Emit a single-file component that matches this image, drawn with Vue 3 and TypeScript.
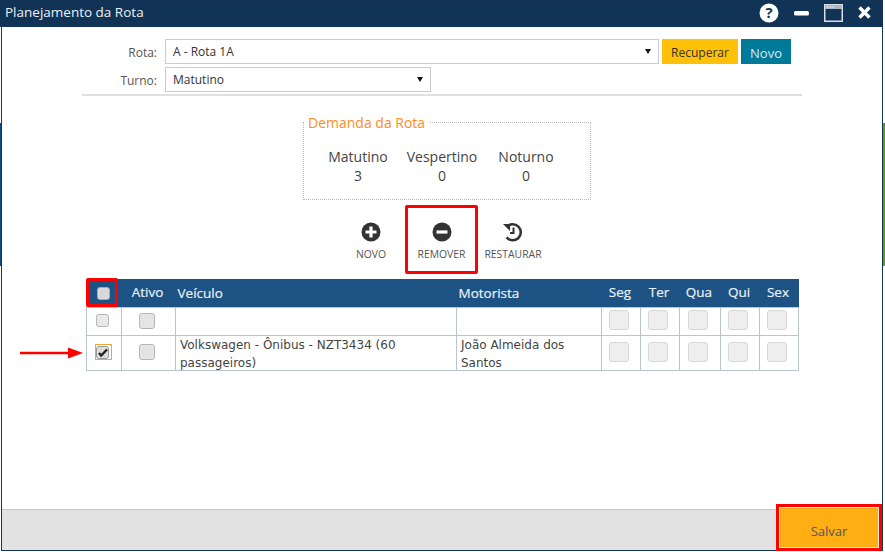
<script setup lang="ts">
interface Row { checked: boolean; vehicle: string; driver: string }
const days: string[] = ['Seg', 'Ter', 'Qua', 'Qui', 'Sex']
const rows: Row[] = [
  { checked: false, vehicle: '', driver: '' },
  { checked: true, vehicle: 'Volkswagen - Ônibus - NZT3434 (60 passageiros)', driver: 'João Almeida dos Santos' }
]
const demand = [
  { name: 'Matutino', value: 3 },
  { name: 'Vespertino', value: 0 },
  { name: 'Noturno', value: 0 }
]
</script>

<template>
  <div class="page">
    <span class="edge edge-left"></span>
    <span class="edge edge-right"></span>
    <div class="window">
      <header class="titlebar">
        <span class="title">Planejamento da Rota</span>
        <div class="controls">
          <svg width="20" height="20" viewBox="0 0 20 20"><circle cx="10" cy="10" r="9.5" fill="#fff"/><text x="10" y="15" text-anchor="middle" class="help">?</text></svg>
          <svg width="15" height="20" viewBox="0 0 15 20"><rect x="0" y="8" width="15" height="4.500" rx="1.500" fill="#fff"/></svg>
          <svg width="19" height="18" viewBox="0 0 19 18"><rect x="0.750" y="0.750" width="17.500" height="16.500" fill="none" stroke="#d5dee6" stroke-width="1.500"/><rect x="1" y="1" width="17" height="4" fill="#a9b8c6"/><path d="M2.500 3h2M5.500 3h2M8.500 3h1.500" stroke="#eef2f5" stroke-width="1.200"/></svg>
          <svg width="13" height="20" viewBox="0 0 13 20"><path d="M1.500 4.500l10 10M11.500 4.500l-10 10" fill="none" stroke="#fff" stroke-width="3.400"/></svg>
        </div>
      </header>

      <main class="body">
        <section class="form">
          <div class="form-row">
            <label class="label">Rota:</label>
            <div class="select wide">A - Rota 1A<i class="caret"></i></div>
            <button class="btn yellow">Recuperar</button>
            <button class="btn teal">Novo</button>
          </div>
          <div class="form-row">
            <label class="label">Turno:</label>
            <div class="select narrow">Matutino<i class="caret"></i></div>
          </div>
        </section>

        <fieldset class="demand">
          <legend>Demanda da Rota</legend>
          <div v-for="d in demand" :key="d.name" class="demand-col">
            <span>{{ d.name }}</span>
            <span>{{ d.value }}</span>
          </div>
        </fieldset>

        <div class="actions">
          <div class="action">
            <svg width="20" height="20" viewBox="0 0 20 20"><circle cx="10" cy="10" r="9.500" fill="#333"/><path d="M10 4.500v11M4.500 10h11" stroke="#fff" stroke-width="3.200"/></svg>
            <span>NOVO</span>
          </div>
          <div class="action marked">
            <svg width="20" height="20" viewBox="0 0 20 20"><circle cx="10" cy="10" r="9.500" fill="#333"/><path d="M4.500 10h11" stroke="#fff" stroke-width="3.200"/></svg>
            <span>REMOVER</span>
          </div>
          <div class="action">
            <svg width="20" height="20" viewBox="0 0 20 20"><path d="M3.800 5A8 8 0 1 1 3.600 15.400" fill="none" stroke="#333" stroke-width="2.600"/><path d="M0 2h7v7z" fill="#333"/><path d="M10.500 5.500v5.500H7" fill="none" stroke="#333" stroke-width="2"/></svg>
            <span>RESTAURAR</span>
          </div>
        </div>

        <div class="table-wrap">
          <span class="head-mark"></span>
          <table class="grid">
            <colgroup>
              <col class="w35"><col class="w54"><col class="w281"><col class="w145">
              <col class="w39"><col class="w39"><col class="w41"><col class="w39"><col class="w39">
            </colgroup>
            <thead>
              <tr>
                <th class="c"><span class="box small head-box"></span></th>
                <th class="c">Ativo</th>
                <th>Veículo</th>
                <th>Motorista</th>
                <th v-for="d in days" :key="d" class="c">{{ d }}</th>
              </tr>
            </thead>
            <tbody>
              <tr v-for="(r, i) in rows" :key="i" :class="{ tall: r.vehicle }">
                <td class="c">
                  <span v-if="r.checked" class="focus">
                    <span class="box small dark">
                      <svg width="10" height="9" viewBox="0 0 10 9"><path d="M1 5l2.200 2.500L9 1.500" fill="none" stroke="#222" stroke-width="2.400"/></svg>
                    </span>
                  </span>
                  <span v-else class="box small"></span>
                </td>
                <td class="c"><span class="box medium"></span></td>
                <td class="text"><div class="cell-text">{{ r.vehicle }}</div></td>
                <td class="text"><div class="cell-text">{{ r.driver }}</div></td>
                <td v-for="d in days" :key="d" class="c"><span class="box large"></span></td>
              </tr>
            </tbody>
          </table>
          <svg class="arrow" width="66" height="12" viewBox="0 0 66 12"><path d="M0 6h52" stroke="#f00" stroke-width="2.500"/><path d="M48 0.500L63 6l-15 5.500z" fill="#f00"/></svg>
        </div>
      </main>

      <footer class="footer">
        <button class="save">Salvar</button>
      </footer>
    </div>
  </div>
</template>

<style>
html, body { margin: 0; padding: 0; background: #fff; }
</style>

<style scoped>
.page {
  position: relative;
  width: 885px;
  height: 552px;
  overflow: hidden;
  font-family: "Open Sans", "Noto Sans", sans-serif;
  color: #444;
  background: #fff;
}
.edge { position: absolute; top: 123px; height: 143px; width: 2px; }
.edge-left { left: 0; background: #0f4a80; }
.edge-right { left: 883px; background: #5f9718; }
.window {
  position: relative;
  width: 882px;
  height: 551px;
  margin-left: 1px;
  box-sizing: border-box;
  border: solid #12365a;
  border-width: 0 1px 1px 1px;
  display: flex;
  flex-direction: column;
}
.titlebar {
  box-sizing: border-box;
  height: 27px;
  margin: 0 -1px 0 -2px;
  flex: none;
  background: #113456;
  display: flex;
  align-items: center;
  justify-content: space-between;
  padding: 0 12px 2px 5px;
  color: #fff;
}
.title { font-size: 13.500px; color: #eaf0f5; margin-bottom: 2px; }
.controls { display: flex; align-items: center; gap: 15px; }
.controls svg { display: block; }
.help { font: bold 15px "Open Sans", sans-serif; fill: #113456; }
.body { flex: 1; min-height: 0; position: relative; }
.form {
  box-sizing: border-box;
  width: 720px;
  height: 69px;
  margin-left: 80px;
  padding-top: 12px;
  border-bottom: 2px solid #e0e0e0;
}
.form-row { display: flex; height: 25px; margin-bottom: 3px; align-items: stretch; }
.label { width: 75px; text-align: right; margin-right: 8px; font-size: 12px; line-height: 27px; color: #555; }
.select {
  position: relative;
  box-sizing: border-box;
  border: 1px solid #ccc;
  padding: 1px 0 0 7px;
  font-size: 12px;
  line-height: 22px;
  color: #333;
  background: #fff;
}
.wide { width: 494px; }
.narrow { width: 266px; }
.caret {
  position: absolute;
  right: 7px;
  top: 9px;
  border: solid transparent;
  border-width: 5px 3.500px 0;
  border-top-color: #111;
}
.btn {
  height: 25px;
  border: 0;
  padding: 2px 0 0;
  font: 12px "Open Sans", "Noto Sans", sans-serif;
}
.yellow { width: 76px; margin-left: 3px; background: #ffc107; color: #333; }
.teal { width: 50px; margin-left: 3px; background: #007a99; color: #d5ecf2; font-size: 13px; }
.demand {
  box-sizing: border-box;
  width: 288px;
  height: 88px;
  margin: 16px 0 0 301px;
  padding: 15px 12px 0 12px;
  border: 1px dotted #bbb;
  display: flex;
  min-inline-size: 0;
}
.demand legend {
  margin-left: -12px;
  padding: 2px 5px 0 4px;
  font-size: 14px;
  line-height: 18px;
  color: #ff8c1a;
}
.demand-col {
  width: 84px;
  flex: none;
  display: flex;
  flex-direction: column;
  align-items: center;
  font-size: 14px;
  line-height: 19px;
  color: #444;
}
.actions {
  display: flex;
  margin: 5px 0 0 335px;
  height: 69px;
}
.action {
  box-sizing: border-box;
  width: 70px;
  height: 69px;
  padding-top: 17px;
  display: flex;
  flex-direction: column;
  align-items: center;
  gap: 5px;
  font-size: 10.400px;
  line-height: 14px;
  color: #555;
}
.action:first-child { width: 68px; }
.action svg { display: block; flex: none; }
.marked { border: 3px solid #f00; border-radius: 2px; padding-top: 14px; width: 73px; }
.table-wrap { position: relative; margin: 5px 0 0 84px; width: 712px; }
.head-mark {
  position: absolute;
  left: 0;
  top: -1px;
  width: 32px;
  height: 29px;
  box-sizing: border-box;
  border: 3px solid #f00;
  border-radius: 2px;
  z-index: 1;
}
.w35 { width: 35px; }
.w54 { width: 54px; }
.w281 { width: 281px; }
.w145 { width: 145px; }
.w39 { width: 39px; }
.w41 { width: 41px; }
.grid {
  width: 712px;
  table-layout: fixed;
  border-collapse: collapse;
}
.grid thead tr { height: 28px; background: #1d5384; }
.grid th {
  padding: 0 0 0 2px;
  text-align: left;
  font-size: 13.500px;
  font-weight: 400;
  color: #e9f0f6;
  -webkit-text-stroke: 0.2px #e9f0f6;
}
.grid th.c { text-align: center; padding: 0 2px 1px 0; }
.grid td { border: 1px solid #b7c6cc; padding: 0; }
.grid tbody tr { height: 28px; }
.grid tbody tr.tall { height: 35px; }
.grid td.text { padding: 0; }
.cell-text {
  padding: 0 4px;
  margin-bottom: -2px;
  font-family: "DejaVu Sans", sans-serif;
  font-size: 12px;
  line-height: 18px;
  color: #444;
}
.grid td.c { text-align: center; padding: 0 4px 4px 0; }
.box {
  display: inline-flex;
  align-items: center;
  justify-content: center;
  box-sizing: border-box;
  vertical-align: middle;
  background: #e9e9e9;
  border: 1px solid #c4c4c4;
  border-radius: 3px;
  box-shadow: inset 0 0 1px #fff;
}
.small { width: 13px; height: 13px; border-color: #b5b5b5; }
.medium { width: 16px; height: 16px; background: #e4e4e4; border-color: #b5b5b5; }
.large { width: 20px; height: 20px; background: #eee; border-color: #d6d6d6; }
.head-box { background: #d8d8d8; border-color: #aaa; }
.dark { background: #dcdcdc; border-color: #999; }
.focus {
  display: inline-flex;
  box-sizing: border-box;
  width: 17px;
  height: 16px;
  margin-right: -3px;
  padding-top: 1px;
  border: 1px solid #f2a33a;
  vertical-align: middle;
}
.arrow { position: absolute; left: -66px; top: 68px; }
.footer {
  position: absolute;
  left: 0;
  right: 0;
  top: 509px;
  height: 41px;
  box-sizing: border-box;
  border-top: 1px solid #c8c8c8;
  background: #e2e2e2;
}
.save {
  position: absolute;
  right: 0;
  bottom: -1px;
  width: 106px;
  height: 47px;
  box-sizing: border-box;
  border: 3px solid #f00;
  box-shadow: inset 0 0 0 1px #f6e9d0;
  background: #ffae14;
  color: #555;
  font: 13px "Open Sans", "Noto Sans", sans-serif;
  padding: 7px 0 0;
}
</style>
